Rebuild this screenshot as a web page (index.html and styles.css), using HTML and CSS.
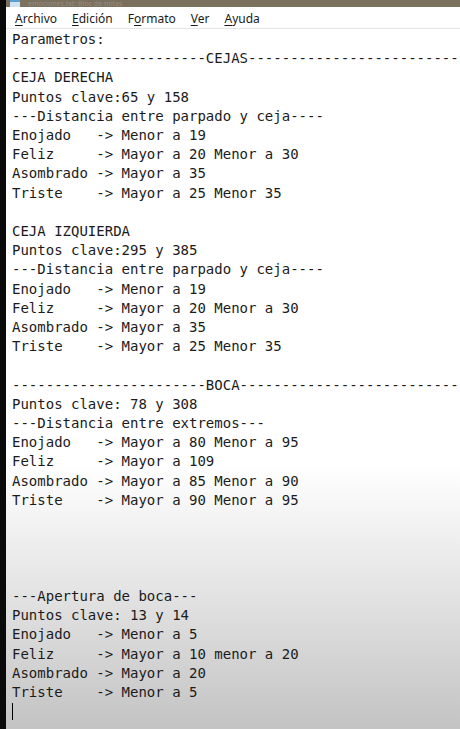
FILE: index.html
```html
<!DOCTYPE html>
<html lang="es">
<head>
<meta charset="utf-8">
<title>Bloc de notas</title>
<link rel="stylesheet" href="styles.css">
</head>
<body>
<div class="screen">
  <div class="edge"></div>
  <div class="window">
    <div class="titlebar">
      <svg class="appicon" width="12" height="7" viewBox="0 0 12 7"><rect x="1" y="0" width="10" height="7" fill="#cfe3f2"/><rect x="1" y="0" width="10" height="2" fill="#5a9fd4"/></svg>
      <span class="title">emociones.txt: Bloc de notas</span>
    </div>
    <div class="menubar">
      <span class="menu"><u>A</u>rchivo</span>
      <span class="menu"><u>E</u>dición</span>
      <span class="menu">F<u>o</u>rmato</span>
      <span class="menu"><u>V</u>er</span>
      <span class="menu"><u>A</u>yuda</span>
    </div>
    <div class="editor">
<pre class="text">Parametros:
-----------------------CEJAS-------------------------
CEJA DERECHA
Puntos clave:65 y 158
---Distancia entre parpado y ceja----
Enojado   -> Menor a 19
Feliz     -> Mayor a 20 Menor a 30
Asombrado -> Mayor a 35
Triste    -> Mayor a 25 Menor 35

CEJA IZQUIERDA
Puntos clave:295 y 385
---Distancia entre parpado y ceja----
Enojado   -> Menor a 19
Feliz     -> Mayor a 20 Menor a 30
Asombrado -> Mayor a 35
Triste    -> Mayor a 25 Menor 35

-----------------------BOCA--------------------------
Puntos clave: 78 y 308
---Distancia entre extremos---
Enojado   -> Mayor a 80 Menor a 95
Feliz     -> Mayor a 109
Asombrado -> Mayor a 85 Menor a 90
Triste    -> Mayor a 90 Menor a 95




---Apertura de boca---
Puntos clave: 13 y 14
Enojado   -> Menor a 5
Feliz     -> Mayor a 10 menor a 20
Asombrado -> Mayor a 20
Triste    -> Menor a 5
<span class="caret"></span></pre>
    </div>
  </div>
</div>
</body>
</html>
```
FILE: styles.css
```css
html, body {
  margin: 0;
  padding: 0;
  background: #000;
}
.screen {
  display: flex;
  width: 460px;
  height: 729px;
  overflow: hidden;
}
.edge {
  width: 6px;
  flex: none;
  background: #0a0a0a;
}
.window {
  flex: 1;
  display: flex;
  flex-direction: column;
  min-width: 0;
  background: #fff;
}
.titlebar {
  height: 7px;
  flex: none;
  background: #7b705e;
  display: flex;
  align-items: center;
  gap: 7px;
  padding-left: 3px;
  overflow: hidden;
}
.appicon {
  flex: none;
}
.title {
  font-family: "Noto Sans", sans-serif;
  font-size: 7px;
  line-height: 7px;
  color: #978c7a;
  white-space: nowrap;
}
.menubar {
  height: 19px;
  padding-top: 2px;
  flex: none;
  display: flex;
  align-items: center;
  gap: 15px;
  padding-left: 9px;
  font-family: "Noto Sans", "Open Sans", sans-serif;
  font-size: 12px;
  color: #1a1a1a;
  border-bottom: 1px solid #e6e6e6;
  background: #fff;
}
.menu u {
  text-decoration-thickness: 1px;
  text-underline-offset: 2px;
}
.editor {
  flex: 1;
  padding: 1px 0 0 6px;
  background: linear-gradient(to bottom, #ffffff 0%, #ffffff 62%, #e4e4e4 80%, #c3c3c3 100%);
  overflow: hidden;
}
.text {
  margin: 0;
  font-family: "DejaVu Sans Mono", monospace;
  font-size: 14px;
  line-height: 19.2px;
  color: #1b1b1b;
  white-space: pre;
}
.caret {
  display: inline-block;
  width: 0;
  height: 17px;
  border-left: 1px solid #000;
  vertical-align: -4px;
}
```
